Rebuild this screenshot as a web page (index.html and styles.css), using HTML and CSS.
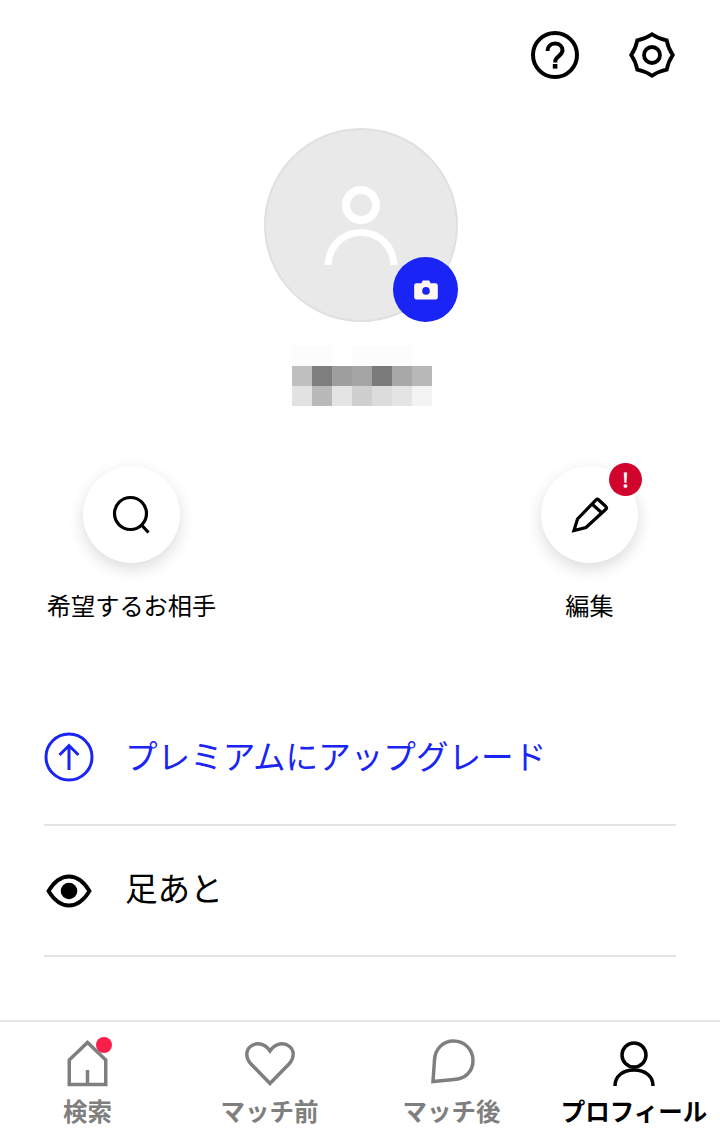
FILE: index.html
```html
<!DOCTYPE html>
<html lang="ja">
<head>
<meta charset="utf-8">
<title>プロフィール</title>
<link rel="stylesheet" href="styles.css">
</head>
<body>
<div class="screen">
  <main class="content">
    <header class="top">
      <svg class="top-icon" viewBox="0 0 48 48"><circle cx="24" cy="24" r="22" fill="none" stroke="#000" stroke-width="4"/><path d="M16.500 20c0-4.500 3.200-7.500 7.500-7.500s7.500 2.800 7.500 6.800c0 3-1.900 4.500-3.900 6-2 1.500-3.300 2.700-3.300 5v1.200" fill="none" stroke="#000" stroke-width="4"/><rect x="21.800" y="33" width="4.600" height="4.600"/></svg>
      <svg class="top-icon" viewBox="0 0 48 48"><path d="M24 3.200Q30.700 7.800 38.700 9.300Q40.200 17.300 44.800 24Q40.200 30.700 38.700 38.700Q30.700 40.200 24 44.800Q17.300 40.200 9.300 38.700Q7.800 30.700 3.200 24Q7.800 17.300 9.300 9.300Q17.300 7.800 24 3.200z" fill="none" stroke="#000" stroke-width="3.800" stroke-miterlimit="8"/><circle cx="24" cy="24" r="8" fill="none" stroke="#000" stroke-width="3.800"/></svg>
    </header>

    <section class="profile">
      <div class="avatar">
        <svg class="avatar-person" viewBox="0 0 76 82"><circle cx="38" cy="19" r="15" fill="none" stroke="#fff" stroke-width="8"/><path d="M5 79C6 60 20 46.500 38 46.500S70 60 71 79" fill="none" stroke="#fff" stroke-width="7"/></svg>
        <span class="camera">
          <svg viewBox="0 0 26 22" class="camera-icon"><path d="M2.500 3.500h5.500l1.500-3h7l1.500 3h5.500a2.500 2.500 0 0 1 2.500 2.500v13a2.500 2.500 0 0 1-2.500 2.500h-21A2.500 2.500 0 0 1 0 19V6a2.500 2.500 0 0 1 2.500-2.500z" fill="#fff8f0"/><circle cx="13" cy="12" r="4.200" fill="#1a24f5"/></svg>
        </span>
      </div>
      <div class="mosaic" aria-hidden="true">
        <i class="m1"></i><i class="m1"></i><i class="m0"></i><i class="m1"></i><i class="m1"></i><i class="m1"></i><i class="m0"></i>
        <i class="a1"></i><i class="a2"></i><i class="a3"></i><i class="a4"></i><i class="a5"></i><i class="a6"></i><i class="a7"></i>
        <i class="b1"></i><i class="b2"></i><i class="b3"></i><i class="b4"></i><i class="b5"></i><i class="b6"></i><i class="b7"></i>
      </div>
    </section>

    <section class="actions">
      <div class="action">
        <span class="action-circle">
          <svg class="action-icon" viewBox="0 0 40 40"><circle cx="18.500" cy="18.500" r="16" fill="none" stroke="#000" stroke-width="3.200"/><path d="M29.500 30l7 7.500" fill="none" stroke="#000" stroke-width="3.200"/></svg>
        </span>
        <span class="action-label">希望するお相手</span>
      </div>
      <div class="action action-edit">
        <span class="action-circle">
          <svg class="action-icon" viewBox="0 0 40 40"><path d="M4 35.500L7.500 24 26 5a2 2 0 0 1 2.800 0l7 6.500a2 2 0 0 1 0 2.800L16 32.500z" fill="none" stroke="#000" stroke-width="3.200" stroke-miterlimit="3"/><path d="M22 9l10.500 9.500" fill="none" stroke="#000" stroke-width="3.200"/></svg>
          <span class="alert">!</span>
        </span>
        <span class="action-label">編集</span>
      </div>
    </section>

    <nav class="menu">
      <div class="menu-row menu-premium">
        <svg class="menu-icon" viewBox="0 0 50 50"><circle cx="25" cy="25" r="23" fill="none" stroke="#1a24f5" stroke-width="3"/><path d="M25 38V13M15.500 23L25 13.500 34.500 23" fill="none" stroke="#1a24f5" stroke-width="3"/></svg>
        <span class="menu-text">プレミアムにアップグレード</span>
      </div>
      <div class="menu-row menu-eye">
        <svg class="menu-icon" viewBox="0 0 50 50"><path d="M4.500 25C10 16 16.500 10.500 25 10.500S40 16 45.500 25C40 34 33.500 39.500 25 39.500S10 34 4.500 25z" fill="none" stroke="#000" stroke-width="3.800"/><circle cx="25" cy="25" r="8.300" fill="#000"/></svg>
        <span class="menu-text">足あと</span>
      </div>
    </nav>
  </main>

  <footer class="tabs">
    <div class="tab">
      <span class="tab-icon-wrap">
        <svg class="tab-icon" viewBox="0 0 48 48"><path d="M5.250 20L23.500 2.500 41.750 20V44.500H5.250zM23.500 44.500V30" fill="none" stroke="#7f7f7f" stroke-width="3.500"/></svg>
        <span class="dot"></span>
      </span>
      <span class="tab-label">検索</span>
    </div>
    <div class="tab">
      <span class="tab-icon-wrap">
        <svg class="tab-icon" viewBox="0 0 48 48"><path d="M24 43.500L5 24C-.5 18-.5 10.500 4.500 6.500c5.500-4.500 14-3.500 19.500 4.500 5.500-8 14-9 19.500-4.500 5 4 5 11.500-.5 17.500z" fill="none" stroke="#7f7f7f" stroke-width="3.500"/></svg>
      </span>
      <span class="tab-label">マッチ前</span>
    </div>
    <div class="tab">
      <span class="tab-icon-wrap">
        <svg class="tab-icon" viewBox="0 0 48 48"><path d="M5 41.500L6.500 20C7 9 15 1 25.500 1 36.500 1 45 9.500 45 20.500 45 31.500 37 39 26 39.500z" fill="none" stroke="#7f7f7f" stroke-width="3.500"/></svg>
      </span>
      <span class="tab-label">マッチ後</span>
    </div>
    <div class="tab tab-active">
      <span class="tab-icon-wrap">
        <svg class="tab-icon" viewBox="0 0 48 48"><circle cx="24" cy="15" r="12" fill="none" stroke="#000" stroke-width="3.500"/><path d="M5 46c0-10 8-16 19-16s19 6 19 16" fill="none" stroke="#000" stroke-width="3.500"/></svg>
      </span>
      <span class="tab-label">プロフィール</span>
    </div>
  </footer>
</div>
</body>
</html>
```
FILE: styles.css
```css
* { box-sizing: border-box; }
html, body { margin: 0; padding: 0; background: #fff; }
body { font-family: "Noto Sans CJK JP", "Noto Sans", sans-serif; color: #000; }
.screen { width: 720px; height: 1136px; display: flex; flex-direction: column; overflow: hidden; }
.content { flex: 1; min-height: 0; }

.top { display: flex; justify-content: flex-end; gap: 49px; padding: 31px 44px 0 0; }
.top-icon { width: 48px; height: 48px; display: block; overflow: visible; }

.profile { display: flex; flex-direction: column; align-items: center; margin-top: 49px; padding-left: 2px; }
.avatar { position: relative; width: 194px; height: 194px; border-radius: 50%; background: #e9e9e9; border: 2px solid #e0e0e3; display: flex; justify-content: center; padding-top: 56px; }
.avatar-person { width: 76px; height: 82px; display: block; }
.camera { position: absolute; right: -2px; bottom: -2px; width: 65px; height: 65px; border-radius: 50%; background: #1a24f5; display: flex; align-items: center; justify-content: center; }
.camera-icon { width: 24px; height: 20px; display: block; }

.mosaic { display: grid; grid-template-columns: repeat(7, 20px); grid-auto-rows: 20px; margin: 24px 0 0 2px; }
.mosaic i { display: block; }
.m0 { background: #fff; } .m1 { background: #fcfcfc; }
.a1 { background: #bfbfbf; } .a2 { background: #7e7e7e; } .a3 { background: #9e9e9e; } .a4 { background: #a5a5a5; } .a5 { background: #7a7a7a; } .a6 { background: #a8a8a8; } .a7 { background: #b8b8b8; }
.b1 { background: #e2e2e2; } .b2 { background: #b9b9b9; } .b3 { background: #e4e4e4; } .b4 { background: #cfcfcf; } .b5 { background: #dcdcdc; } .b6 { background: #e4e4e4; } .b7 { background: #f3f3f3; }

.actions { display: flex; justify-content: space-between; margin-top: 60px; padding: 0 82px 0 46px; }
.action { display: flex; flex-direction: column; align-items: center; width: 171px; }
.action-edit { width: 97px; }
.action-circle { position: relative; width: 97px; height: 97px; border-radius: 50%; background: #fff; box-shadow: 0 6px 16px rgba(0,0,0,.14); display: flex; align-items: center; justify-content: center; }
.action-icon { width: 40px; height: 40px; display: block; }
.alert { position: absolute; top: -3px; right: -4px; width: 33px; height: 33px; border-radius: 50%; background: #d0042d; color: #fff; font-size: 20px; font-weight: 700; line-height: 33px; text-align: center; }
.action-label { font-size: 24.2px; font-weight: 400; line-height: 36px; margin-top: 24px; white-space: nowrap; color: #000; }

.menu { margin: 71px 44px 0; }
.menu-row { display: flex; align-items: center; gap: 31px; height: 131px; border-bottom: 2px solid #e3e3e3; font-size: 32.6px; font-weight: 400; }
.menu-premium { height: 132px; color: #1a24f5; }
.menu-premium .menu-icon { margin-bottom: 4px; }
.menu-premium .menu-text { margin-bottom: 10px; }
.menu-text { margin-bottom: 8px; }
.menu-icon { width: 50px; height: 50px; display: block; flex: none; }

.tabs { flex: none; height: 116px; border-top: 2px solid #e6e6e6; display: grid; grid-template-columns: 175px 189px 175px 181px; background: #fff; }
.tab { display: flex; flex-direction: column; align-items: center; padding-top: 18px; color: #7f7f7f; }
.tab-active { color: #000; padding-left: 9px; }
.tab-icon-wrap { position: relative; display: block; width: 48px; height: 48px; }
.tab-icon { display: block; width: 48px; height: 48px; overflow: visible; }
.dot { position: absolute; top: -3px; right: 0; width: 16px; height: 16px; border-radius: 50%; background: #f91f48; }
.tab-label { font-size: 24.5px; font-weight: 700; line-height: 34px; margin-top: 6px; white-space: nowrap; }
```
